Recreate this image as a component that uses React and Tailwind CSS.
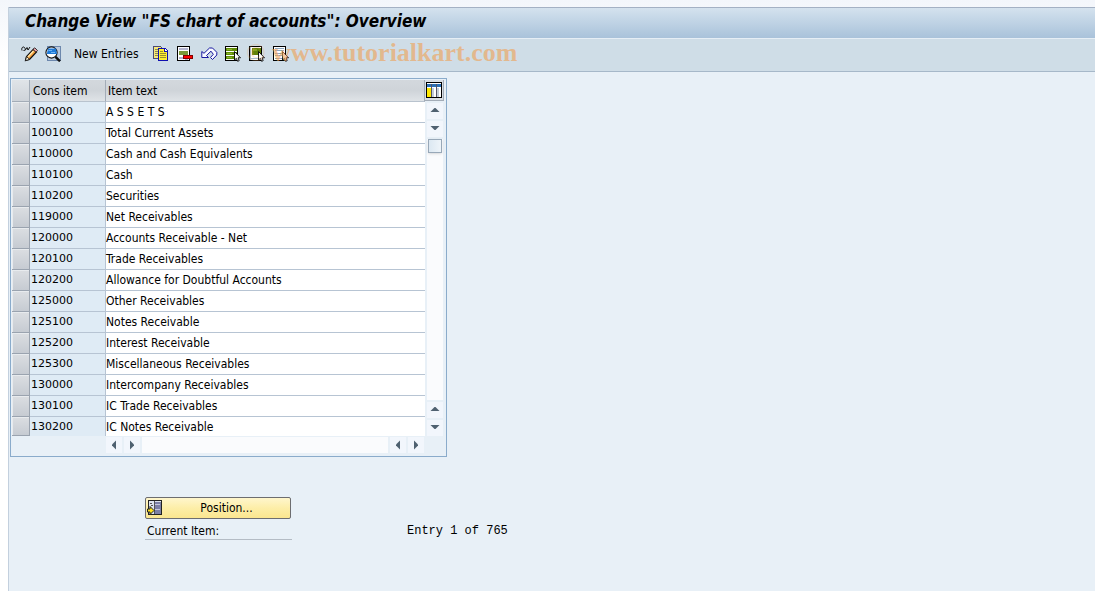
import React from "react";

const rows = [
  ["100000", "A S S E T S"],
  ["100100", "Total Current Assets"],
  ["110000", "Cash and Cash Equivalents"],
  ["110100", "Cash"],
  ["110200", "Securities"],
  ["119000", "Net Receivables"],
  ["120000", "Accounts Receivable - Net"],
  ["120100", "Trade Receivables"],
  ["120200", "Allowance for Doubtful Accounts"],
  ["125000", "Other Receivables"],
  ["125100", "Notes Receivable"],
  ["125200", "Interest Receivable"],
  ["125300", "Miscellaneous Receivables"],
  ["130000", "Intercompany Receivables"],
  ["130100", "IC Trade Receivables"],
  ["130200", "IC Notes Receivable"],
];

function Svg({ children, w = 16, h = 16 }) {
  return (
    <svg width={w} height={h} viewBox={`0 0 ${w} ${h}`} shapeRendering="crispEdges" fill="none" aria-hidden="true">
      {children}
    </svg>
  );
}

const Cursor = () => (
  <g shapeRendering="auto">
    <path d="M9.5 5.5 V14 L11.4 12.4 L12.6 15.3 L14.2 14.6 L13 11.8 H15.5 Z" fill="#fff" stroke="#000" strokeWidth="0.9" />
  </g>
);

const Sheet = () => <path d="M0.5 0.5 H12.5 V14.5 H0.5 Z" fill="#fff" stroke="#000" strokeWidth="1.2" />;

const PencilIcon = () => (
  <Svg w={17}>
    <g shapeRendering="auto">
      <path d="M1 4.5 C0 2 2 0 3.5 1.5 C5 3 4 5 2.5 4.5 M4 4.5 L6 1.5 L7 4 L9 1" stroke="#111" />
      <path d="M4.5 14.5 L5.5 10.5 L12.5 3 L15.5 6 L8.5 13.5 Z" fill="#f59a32" stroke="#111" strokeWidth="1.2" />
      <path d="M7 11 L12.5 5" stroke="#ffe5a8" strokeWidth="1.5" />
      <path d="M12 3.5 L13.8 1.8 L16.5 4.5 L15 6.2 Z" fill="#e8a0a8" stroke="#111" strokeWidth="0.8" />
      <path d="M5.5 10.5 L8.5 13.3 L4.5 14.8 Z" fill="#fff4d8" stroke="#111" strokeWidth="0.8" />
    </g>
  </Svg>
);

const DisplayIcon = () => (
  <Svg>
    <path d="M2.5 0.5 H15.5 V14.5 H2.5 Z" fill="#b9c9df" stroke="#6d88ad" />
    <g shapeRendering="auto">
      <circle cx="6.5" cy="6.5" r="5.6" fill="#fff" stroke="#111" strokeWidth="1.1" />
      <path d="M3 2.5 H11 L12 8 H1.8 Z" fill="#1f7ad8" />
      <path d="M3.5 4.5 H7 M6 6.5 H10" stroke="#6db4f5" />
      <path d="M10.5 10.8 L15 15.3" stroke="#111" strokeWidth="2.4" />
    </g>
  </Svg>
);

const CopyIcon = () => (
  <Svg>
    <path d="M0.5 0.5 H7.5 L9.5 2.5 V12.5 H0.5 Z" fill="#f7e878" stroke="#4a4a75" />
    <path d="M2 3.5 H5 M2 5.5 H5 M2 7.5 H5 M2 9.5 H5" stroke="#8a8a50" />
    <path d="M5.5 2.5 H12.5 L14.5 4.5 V14.5 H5.5 Z" fill="#fff030" stroke="#1010b0" />
    <path d="M11.5 2.5 V5.5 H14.5" fill="#fff" stroke="#1010b0" />
    <path d="M7 5.5 H10 M7 7.5 H13 M7 9.5 H13 M7 11.5 H13" stroke="#9a9030" />
  </Svg>
);

const DeleteIcon = () => (
  <Svg>
    <Sheet />
    <path d="M2 2 H11 V4 H2 Z" fill="#b4b4d0" />
    <path d="M2 5 H11 V9 H2 Z" fill="#7a9a38" />
    <path d="M2 11 H6 V13 H2 Z M8 13 H11 V14 H8 Z" fill="#b4b4d0" />
    <path d="M6.5 9.5 H15.5 V12.5 H6.5 Z" fill="#f80000" stroke="#800000" />
    <path d="M7 10 H15 V12 H7 Z" fill="#ff0000" />
  </Svg>
);

const UndoIcon = () => (
  <Svg w={17}>
    <g shapeRendering="auto">
      <path
        d="M0.8 11.5 V5.5 L3 7.3 L8.5 2 H11.5 L15.8 6.3 V9 L11.5 13.5 L9.5 11.5 L12.3 8.3 L10 5.2 L5.5 9.5 L7.5 11.5 Z"
        fill="#f8faff"
        stroke="#1818a0"
      />
    </g>
  </Svg>
);

const SelectAllIcon = () => (
  <Svg>
    <Sheet />
    <path d="M1 2 H12 V5 H1 Z M1 6 H12 V9 H1 Z M1 10 H12 V13 H1 Z" fill="#608c08" />
    <path d="M2 3.5 H7 M2 7.5 H7 M2 11.5 H7" stroke="#8cb82c" />
    <Cursor />
  </Svg>
);

const SelectBlockIcon = () => (
  <Svg>
    <Sheet />
    <path d="M1 1 H2 V14 H1 Z M2 12 H9 V13 H2 Z" fill="#a9bacd" />
    <path d="M3 2 H12 V9 H3 Z" fill="#608008" />
    <path d="M4 3 H8 V5 H4 Z" fill="#84a020" />
    <Cursor />
  </Svg>
);

const DeselectIcon = () => (
  <Svg>
    <Sheet />
    <path d="M2 2.5 H11 M2 4.5 H11 M2 7.5 H9 M2 9.5 H9 M2 12.5 H9" stroke="#8aa5bd" />
    <Cursor />
  </Svg>
);

const ColumnsIcon = () => (
  <Svg>
    <path d="M0 0 H16 V16 H0 Z" fill="#000" />
    <path d="M1 1 H15 V15 H1 Z" fill="#fff" />
    <path d="M1 2 H15 V5 H1 Z" fill="#2a6fb5" />
    <path d="M1 6 H5 V15 H1 Z" fill="#ffe800" />
    <path d="M6 6 H8 V15 H6 Z M11 6 H13 V15 H11 Z" fill="#c3ccd8" />
    <path d="M5.5 2 V15 M10.5 2 V15" stroke="#556" />
  </Svg>
);

const PositionIcon = () => (
  <Svg w={17}>
    <path d="M1.5 0.5 H14.5 V14.5 H1.5 Z" fill="#dde4ee" stroke="#222" />
    <path d="M8 2 H14 V14 H8 Z" fill="#7b7fa6" />
    <path d="M8 4.5 H13 M8 9.5 H13" stroke="#c5c8dc" />
    <path d="M3 3.5 H5 M4 5.5 H6 M7.5 1 V14" stroke="#555" />
    <g shapeRendering="auto">
      <path d="M0.5 9 H3 V6.5 L7 10.5 L3 14.5 V12 H0.5 Z" fill="#ffe21a" stroke="#222" />
    </g>
  </Svg>
);

const arrows = {
  up: "M3.5 9 L7.5 5 H8.5 L12.5 9 Z",
  down: "M3.5 5 H12.5 L8.5 9 H7.5 Z",
  left: "M10 3.5 V12.5 L6 8.5 V7.5 Z",
  right: "M6 3.5 L10 7.5 V8.5 L6 12.5 Z",
};

function ScrollButton({ dir, label }) {
  return (
    <button aria-label={label} className="flex size-4 shrink-0 items-center justify-center bg-[#f2f6fc]">
      <svg width="16" height="16" viewBox="0 0 16 16" aria-hidden="true">
        <path d={arrows[dir]} fill="#4f6170" />
      </svg>
    </button>
  );
}

function ToolButton({ label, children }) {
  return (
    <button aria-label={label} title={label} className="flex w-6 shrink-0 items-center justify-start">
      {children}
    </button>
  );
}

export default function App() {
  return (
    <div className="flex min-h-screen flex-col bg-gradient-to-b from-[#f3f6fb] to-white to-10% pt-[7px] pl-2 font-['DejaVu_Sans_Condensed','DejaVu_Sans',sans-serif] text-[12px] leading-4 text-black">
      <div className="flex grow flex-col border-l border-[#c3d0de] bg-[#e8f0f7]">
        <header>
          <div className="flex h-8 items-center border-t border-b border-t-[#a4b1c4] border-b-[#e6eef5] bg-gradient-to-b from-[#d4e2ee] to-[#a9c2da] pl-4">
            <h1 className="pb-1 text-[17px] leading-5 font-bold whitespace-nowrap italic">
              Change View "FS chart of accounts": Overview
            </h1>
          </div>
          <div className="relative flex h-[33px] items-center border-b border-[#a6b8c9] bg-[#cfdde7] pb-0.5 pl-3" role="toolbar" aria-label="Application toolbar">
            <ToolButton label="Display / Change"><PencilIcon /></ToolButton>
            <ToolButton label="Details"><DisplayIcon /></ToolButton>
            <button className="w-[84px] shrink-0 pl-[5px] text-left whitespace-nowrap">New Entries</button>
            <ToolButton label="Copy As"><CopyIcon /></ToolButton>
            <ToolButton label="Delete"><DeleteIcon /></ToolButton>
            <ToolButton label="Undo Change"><UndoIcon /></ToolButton>
            <ToolButton label="Select All"><SelectAllIcon /></ToolButton>
            <ToolButton label="Select Block"><SelectBlockIcon /></ToolButton>
            <ToolButton label="Deselect All"><DeselectIcon /></ToolButton>
            <div className="pointer-events-none absolute top-0 left-[237px] font-['Liberation_Serif',serif] text-[26px] leading-7 font-bold whitespace-nowrap text-[#f0a052]/60">
              <span className="opacity-40">©</span> www.tutorialkart.com
            </div>
          </div>
        </header>

        <main className="flex flex-col items-start pt-[6px] pl-px">
          <section className="flex w-[437px] max-w-full flex-col border border-[#8aabcb] bg-[#e8f0f7] p-px pb-[3px]" aria-label="Chart of accounts">
            <div className="flex">
              <table className="grow table-fixed border-separate border-spacing-0">
                <colgroup>
                  <col className="w-[18px]" />
                  <col className="w-[76px]" />
                  <col />
                </colgroup>
                <thead>
                  <tr className="h-[22px] text-left">
                    <th className="border-r border-b border-[#a3acb7] bg-gradient-to-b from-[#e0e4e8] to-[#ced3d9] p-0" aria-label="Selection" />
                    <th className="border-r border-b border-r-[#a3acb7] border-b-[#b9c3ce] bg-gradient-to-b from-[#d3d8dd] via-[#cfd4d9] to-[#dfe3e7] p-0 pl-[3px] font-normal">Cons item</th>
                    <th className="border-r border-b border-r-[#a3acb7] border-b-[#b9c3ce] bg-gradient-to-b from-[#d3d8dd] via-[#cfd4d9] to-[#dfe3e7] p-0 pl-[2px] font-normal">Item text</th>
                  </tr>
                </thead>
                <tbody>
                  {rows.map(([id, text]) => (
                    <tr key={id} className="group h-[21px] last:h-[19px]">
                      <td className="border-r border-b border-[#9aa3af] p-0">
                        <button aria-label={`Select ${id}`} className="block h-5 w-full border-t border-l border-[#e8ebee] bg-gradient-to-b from-[#dadde1] to-[#c6cbd2] group-last:h-[18px]" />
                      </td>
                      <td className="border-r border-b border-[#b7c4d3] bg-[#dfebf5] p-0 pl-px font-['DejaVu_Sans',sans-serif] text-[11px] group-last:border-b-0">{id}</td>
                      <td className="border-b border-[#b7c4d3] bg-white p-0 whitespace-nowrap group-last:border-b-0">{text}</td>
                    </tr>
                  ))}
                </tbody>
              </table>
              <div className="flex w-5 shrink-0 flex-col items-center gap-0.5 pr-px">
                <button aria-label="Table settings" className="flex h-[21px] w-full items-center justify-center border-r border-b border-[#a3acb7] bg-[#d9dee4]">
                  <ColumnsIcon />
                </button>
                <ScrollButton dir="up" label="Scroll up" />
                <ScrollButton dir="down" label="Page up" />
                <div className="flex w-4 grow flex-col items-center bg-[#fafbfd]">
                  <div className="h-[14px] w-[14px] border border-[#98a8b8] bg-gradient-to-r from-[#dce8f2] to-[#eef4f9] shadow-sm" />
                </div>
                <ScrollButton dir="up" label="Page down" />
                <ScrollButton dir="down" label="Scroll down" />
              </div>
            </div>
            <div className="mt-px flex gap-0.5 pr-[21px] pl-[94px]">
              <ScrollButton dir="left" label="Scroll left" />
              <ScrollButton dir="right" label="Page left" />
              <div className="h-4 grow bg-[#fafbfd]" />
              <ScrollButton dir="left" label="Page right" />
              <ScrollButton dir="right" label="Scroll right" />
            </div>
          </section>

          <section className="mt-10 flex flex-col pl-[135px]">
            <button className="flex h-[22px] w-[146px] items-center rounded-xs border border-[#6d6d70] bg-gradient-to-b from-[#fff6cc] via-[#fdeea8] to-[#fbe68f] pl-px">
              <PositionIcon />
              <span className="grow pr-px text-center">Position...</span>
            </button>
            <div className="flex items-start pt-1">
              <div className="h-[17px] w-[147px] border-b border-[#b4bcc5] pl-0.5">Current Item:</div>
              <div className="pl-[115px] font-['Liberation_Mono',monospace] whitespace-nowrap">Entry 1 of 765</div>
            </div>
          </section>
        </main>
      </div>
    </div>
  );
}
